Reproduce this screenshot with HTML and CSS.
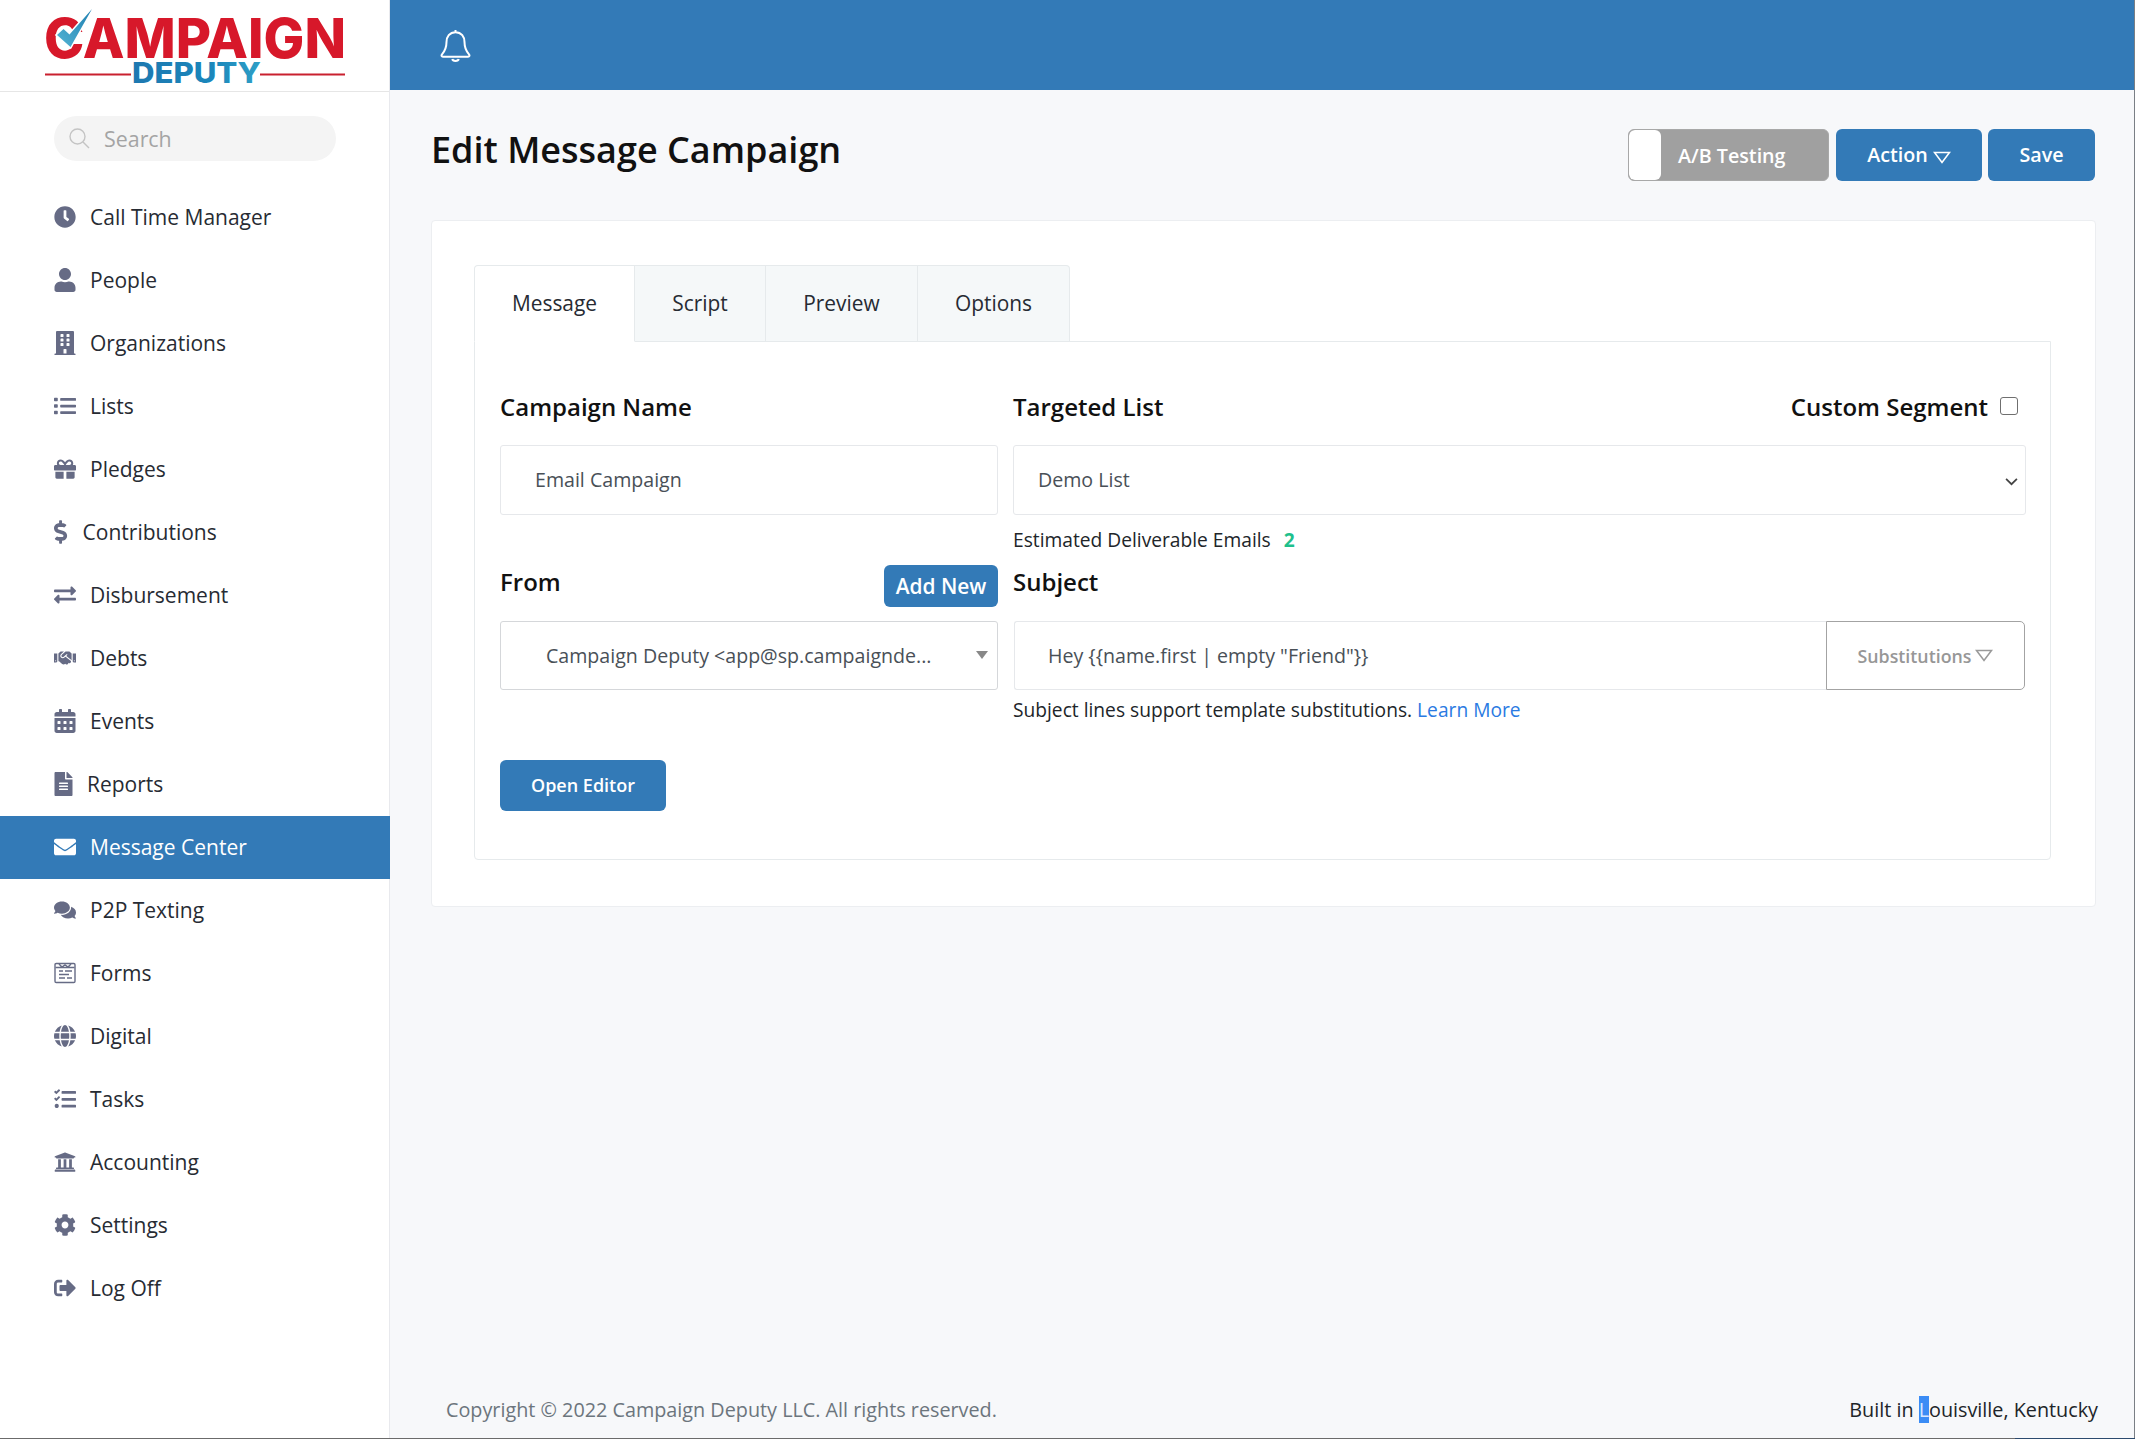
FILE: index.html
```html
<!DOCTYPE html>
<html lang="en">
<head>
<meta charset="utf-8">
<title>Edit Message Campaign</title>
<link rel="stylesheet" href="styles.css">
</head>
<body>
<div class="app">
  <aside class="sidebar">
    <div class="brand">
      <svg class="logo" viewBox="0 0 390 91" aria-label="Campaign Deputy">
        <defs>
          <linearGradient id="blueGrad" x1="0" y1="0" x2="1" y2="0"><stop offset="0" stop-color="#1e78b0"/><stop offset="0.6" stop-color="#1a86bb"/><stop offset="1" stop-color="#2f9fc6"/></linearGradient>
          <linearGradient id="checkGrad" x1="0" y1="1" x2="1" y2="0"><stop offset="0" stop-color="#55b4d4"/><stop offset="1" stop-color="#1f7fb0"/></linearGradient>
        </defs>
        <text class="logo-top" x="44" y="58" textLength="302" lengthAdjust="spacingAndGlyphs">CAMPAIGN</text>
        <path d="M92 9 L70.500 47 L57 35 L63.500 29 L69.500 34.500 Z" fill="url(#checkGrad)" stroke="#fff" stroke-width="3" paint-order="stroke"/>
        <rect x="45" y="73.500" width="86" height="2" fill="#c9202f"/>
        <rect x="260" y="73.500" width="85" height="2" fill="#c9202f"/>
        <text class="logo-bottom" x="132" y="83" textLength="129" lengthAdjust="spacingAndGlyphs" fill="url(#blueGrad)">DEPUTY</text>
      </svg>
    </div>
    <div class="search">
      <svg class="search-ico" viewBox="0 0 21 21"><circle cx="8.500" cy="8.500" r="7.500"/><path d="M14 14 L20 20"/></svg>
      <span>Search</span>
    </div>
    <ul class="nav">
      <li class="nav-item"><svg class="ico" viewBox="0 0 512 512"><path d="M256,8C119,8,8,119,8,256S119,504,256,504,504,393,504,256,393,8,256,8Zm92.49,313h0l-20,25a16,16,0,0,1-22.49,2.5h0l-67-49.72a40,40,0,0,1-15-31.23V112a16,16,0,0,1,16-16h32a16,16,0,0,1,16,16V256l58,42.5A16,16,0,0,1,348.49,321Z"/></svg><span>Call Time Manager</span></li>
      <li class="nav-item"><svg class="ico" viewBox="0 0 448 512"><path d="M224 256c70.700 0 128-57.300 128-128S294.700 0 224 0 96 57.300 96 128s57.300 128 128 128zm89.600 32h-16.700c-22.200 10.200-46.900 16-72.900 16s-50.600-5.800-72.900-16h-16.700C60.200 288 0 348.200 0 422.400V464c0 26.500 21.500 48 48 48h352c26.500 0 48-21.500 48-48v-41.600c0-74.200-60.200-134.400-134.400-134.400z"/></svg><span>People</span></li>
      <li class="nav-item"><svg class="ico" viewBox="0 0 448 512"><path d="M436 480h-20V24c0-13.255-10.745-24-24-24H56C42.745 0 32 10.745 32 24v456H12c-6.627 0-12 5.373-12 12v20h448v-20c0-6.627-5.373-12-12-12zM128 76c0-6.627 5.373-12 12-12h40c6.627 0 12 5.373 12 12v40c0 6.627-5.373 12-12 12h-40c-6.627 0-12-5.373-12-12V76zm0 96c0-6.627 5.373-12 12-12h40c6.627 0 12 5.373 12 12v40c0 6.627-5.373 12-12 12h-40c-6.627 0-12-5.373-12-12v-40zm52 148h-40c-6.627 0-12-5.373-12-12v-40c0-6.627 5.373-12 12-12h40c6.627 0 12 5.373 12 12v40c0 6.627-5.373 12-12 12zm76 160h-64v-84c0-6.627 5.373-12 12-12h40c6.627 0 12 5.373 12 12v84zm64-172c0 6.627-5.373 12-12 12h-40c-6.627 0-12-5.373-12-12v-40c0-6.627 5.373-12 12-12h40c6.627 0 12 5.373 12 12v40zm0-96c0 6.627-5.373 12-12 12h-40c-6.627 0-12-5.373-12-12v-40c0-6.627 5.373-12 12-12h40c6.627 0 12 5.373 12 12v40zm0-96c0 6.627-5.373 12-12 12h-40c-6.627 0-12-5.373-12-12V76c0-6.627 5.373-12 12-12h40c6.627 0 12 5.373 12 12v40z"/></svg><span>Organizations</span></li>
      <li class="nav-item"><svg class="ico" viewBox="0 0 512 512"><path d="M0 80a16 16 0 0 1 16-16h56a16 16 0 0 1 16 16v48a16 16 0 0 1-16 16H16a16 16 0 0 1-16-16zM0 232a16 16 0 0 1 16-16h56a16 16 0 0 1 16 16v48a16 16 0 0 1-16 16H16a16 16 0 0 1-16-16zM0 384a16 16 0 0 1 16-16h56a16 16 0 0 1 16 16v48a16 16 0 0 1-16 16H16a16 16 0 0 1-16-16zM144 88a16 16 0 0 1 16-16h336a16 16 0 0 1 16 16v32a16 16 0 0 1-16 16H160a16 16 0 0 1-16-16zM144 240a16 16 0 0 1 16-16h336a16 16 0 0 1 16 16v32a16 16 0 0 1-16 16H160a16 16 0 0 1-16-16zM144 392a16 16 0 0 1 16-16h336a16 16 0 0 1 16 16v32a16 16 0 0 1-16 16H160a16 16 0 0 1-16-16z"/></svg><span>Lists</span></li>
      <li class="nav-item"><svg class="ico" viewBox="0 0 512 512"><path d="M32 448c0 17.700 14.300 32 32 32h160V320H32v128zm256 32h160c17.700 0 32-14.300 32-32V320H288v160zm192-320h-42.100c6.200-12.100 10.100-25.500 10.100-40 0-48.500-39.500-88-88-88-41.600 0-68.500 21.300-103 68.300-34.500-47-61.400-68.300-103-68.300-48.500 0-88 39.500-88 88 0 14.500 3.800 27.900 10.100 40H32c-17.700 0-32 14.300-32 32v80c0 8.800 7.200 16 16 16h480c8.800 0 16-7.200 16-16v-80c0-17.700-14.300-32-32-32zm-326.100 0c-22.100 0-40-17.900-40-40s17.900-40 40-40c19.900 0 34.600 3.300 86.100 80h-86.100zm206.100 0h-86.100c51.400-76.500 65.700-80 86.100-80 22.100 0 40 17.900 40 40s-17.900 40-40 40z"/></svg><span>Pledges</span></li>
      <li class="nav-item"><svg class="ico ico-dollar" viewBox="0 0 320 512"><path d="M209.200 233.400l-108-31.600C88.700 198.200 80 186.500 80 173.500c0-16.300 13.200-29.500 29.500-29.500h66.300c12.200 0 24.200 3.700 34.200 10.500 6.100 4.100 14.300 3.100 19.500-2l34.800-34c7.100-6.900 6.100-18.400-1.800-24.500C238 74.800 207.400 64.100 176 64V16c0-8.800-7.200-16-16-16h-32c-8.800 0-16 7.200-16 16v48h-2.500C45.800 64-5.400 118.700.5 183.600c4.200 46.100 39.400 83.600 83.800 96.600l102.500 30c12.500 3.700 21.200 15.300 21.200 28.300 0 16.300-13.200 29.500-29.500 29.500h-66.300C100 368 88 364.300 78 357.500c-6.100-4.100-14.300-3.100-19.500 2l-34.800 34c-7.100 6.900-6.100 18.400 1.800 24.500 24.500 19.200 55.100 29.900 86.500 30v48c0 8.800 7.200 16 16 16h32c8.800 0 16-7.200 16-16v-48.200c46.600-.9 90.300-28.600 105.700-72.700 21.500-61.600-14.600-124.800-72.500-141.700z"/></svg><span>Contributions</span></li>
      <li class="nav-item"><svg class="ico" viewBox="0 0 512 512"><path d="M0 168v-16c0-13.255 10.745-24 24-24h360V80c0-21.367 25.899-32.042 40.971-16.971l80 80c9.372 9.373 9.372 24.569 0 33.941l-80 80C409.956 271.982 384 261.456 384 240v-48H24c-13.255 0-24-10.745-24-24zm488 152H128v-48c0-21.314-25.862-32.080-40.971-16.971l-80 80c-9.372 9.373-9.372 24.569 0 33.941l80 80C102.057 463.997 128 453.437 128 432v-48h360c13.255 0 24-10.745 24-24v-16c0-13.255-10.745-24-24-24z"/></svg><span>Disbursement</span></li>
      <li class="nav-item"><svg class="ico" viewBox="0 0 640 512"><path d="M434.700 64h-85.900c-8 0-15.700 3-21.600 8.400l-98.300 90c-.1.1-.2.300-.3.400-16.600 15.600-16.300 40.500-2.100 56 12.700 13.900 39.400 17.600 56.100 2.700.1-.1.300-.1.400-.2l79.900-73.200c6.500-5.900 16.700-5.500 22.600 1 6 6.500 5.500 16.600-1 22.600l-26.100 23.900L504 313.800c2.900 2.400 5.500 5 7.900 7.700V128l-54.600-54.600c-5.900-6-14.100-9.400-22.600-9.400zM544 128.200v223.900c0 17.700 14.300 32 32 32h64V128.200h-96zm48 223.900c-8.800 0-16-7.200-16-16s7.200-16 16-16 16 7.200 16 16-7.200 16-16 16zM0 384h64c17.700 0 32-14.300 32-32V128.200H0V384zm48-63.900c8.800 0 16 7.200 16 16s-7.200 16-16 16-16-7.200-16-16c0-8.900 7.200-16 16-16zm435.900 18.600L334.600 217.500l-30 27.500c-29.700 27.100-75.200 24.500-101.700-4.400-26.900-29.400-24.800-74.900 4.400-101.700L289.100 64h-83.800c-8.500 0-16.600 3.400-22.600 9.400L128 128v223.900h18.300l90.500 81.900c27.400 22.300 67.700 18.100 90-9.300l.2-.2 17.900 15.500c15.900 13 39.400 10.500 52.300-5.400l31.400-38.600 5.400 4.400c13.700 11.100 33.900 9.100 45-4.700l9.500-11.700c11.200-13.800 9.100-33.900-4.600-45.100z"/></svg><span>Debts</span></li>
      <li class="nav-item"><svg class="ico" viewBox="0 0 448 512"><path d="M0 464c0 26.500 21.500 48 48 48h352c26.500 0 48-21.500 48-48V192H0v272zm320-196c0-6.600 5.400-12 12-12h40c6.600 0 12 5.400 12 12v40c0 6.600-5.400 12-12 12h-40c-6.600 0-12-5.400-12-12v-40zm0 128c0-6.600 5.400-12 12-12h40c6.600 0 12 5.400 12 12v40c0 6.600-5.400 12-12 12h-40c-6.600 0-12-5.400-12-12v-40zM192 268c0-6.600 5.400-12 12-12h40c6.600 0 12 5.400 12 12v40c0 6.600-5.400 12-12 12h-40c-6.600 0-12-5.400-12-12v-40zm0 128c0-6.600 5.400-12 12-12h40c6.600 0 12 5.400 12 12v40c0 6.600-5.400 12-12 12h-40c-6.600 0-12-5.400-12-12v-40zM64 268c0-6.600 5.400-12 12-12h40c6.600 0 12 5.400 12 12v40c0 6.600-5.400 12-12 12H76c-6.600 0-12-5.400-12-12v-40zm0 128c0-6.600 5.400-12 12-12h40c6.600 0 12 5.400 12 12v40c0 6.600-5.400 12-12 12H76c-6.600 0-12-5.400-12-12v-40zM400 64h-48V16c0-8.800-7.200-16-16-16h-32c-8.800 0-16 7.200-16 16v48H160V16c0-8.800-7.200-16-16-16h-32c-8.800 0-16 7.200-16 16v48H48C21.500 64 0 85.500 0 112v48h448v-48c0-26.500-21.500-48-48-48z"/></svg><span>Events</span></li>
      <li class="nav-item"><svg class="ico ico-file" viewBox="0 0 384 512"><path d="M224 136V0H24C10.700 0 0 10.700 0 24v464c0 13.300 10.700 24 24 24h336c13.300 0 24-10.700 24-24V160H248c-13.200 0-24-10.800-24-24zm64 236c0 6.600-5.400 12-12 12H108c-6.600 0-12-5.400-12-12v-8c0-6.600 5.400-12 12-12h168c6.600 0 12 5.400 12 12v8zm0-64c0 6.600-5.400 12-12 12H108c-6.600 0-12-5.400-12-12v-8c0-6.600 5.400-12 12-12h168c6.600 0 12 5.400 12 12v8zm0-72v8c0 6.600-5.400 12-12 12H108c-6.600 0-12-5.400-12-12v-8c0-6.600 5.400-12 12-12h168c6.600 0 12 5.400 12 12zm96-114.100v6.100H256V0h6.100c6.400 0 12.500 2.500 17 7l97.900 98c4.500 4.500 7 10.600 7 16.900z"/></svg><span>Reports</span></li>
      <li class="nav-item active"><svg class="ico" viewBox="0 0 512 512"><path d="M502.300 190.800c3.900-3.100 9.700-.2 9.700 4.700V400c0 26.500-21.500 48-48 48H48c-26.500 0-48-21.500-48-48V195.600c0-5 5.700-7.800 9.700-4.700 22.400 17.400 52.100 39.500 154.100 113.600 21.100 15.400 56.700 47.800 92.200 47.600 35.700.3 72-32.800 92.300-47.600 102-74.100 131.600-96.300 154-113.700zM256 320c23.200.4 56.600-29.200 73.400-41.400 132.700-96.300 142.800-104.700 173.400-128.700 5.800-4.500 9.200-11.500 9.200-18.900v-19c0-26.500-21.500-48-48-48H48C21.500 64 0 85.500 0 112v19c0 7.400 3.400 14.300 9.200 18.900 30.600 23.900 40.700 32.400 173.400 128.700 16.800 12.200 50.200 41.800 73.400 41.400z"/></svg><span>Message Center</span></li>
      <li class="nav-item"><svg class="ico" viewBox="0 0 576 512"><path d="M416 192c0-88.400-93.100-160-208-160S0 103.600 0 192c0 34.300 14.100 65.900 38 92-13.400 30.200-35.500 54.200-35.800 54.500-2.200 2.300-2.800 5.700-1.500 8.700S4.800 352 8 352c36.600 0 66.900-12.300 88.700-25 32.200 15.700 70.300 25 111.300 25 114.900 0 208-71.600 208-160zm122 220c23.900-26 38-57.700 38-92 0-66.900-53.500-124.200-129.300-148.100.9 6.600 1.300 13.300 1.300 20.100 0 105.900-107.700 192-240 192-10.800 0-21.300-.8-31.700-1.900C207.800 439.600 281.800 480 368 480c41 0 79.100-9.200 111.300-25 21.800 12.700 52.100 25 88.700 25 3.200 0 6.100-1.900 7.300-4.800 1.300-2.900.7-6.300-1.500-8.700-.3-.3-22.400-24.200-35.800-54.500z"/></svg><span>P2P Texting</span></li>
      <li class="nav-item"><svg class="ico ico-line" viewBox="0 0 22 22"><rect x="1" y="1.500" width="20" height="19" rx="1.200"/><path d="M1.500 5.500 H20.500 M5 2 L8 5 L11 2.800 L14 5 L17 2 M5 9 H9 M11 9 H18 M5 12.500 H15 M5 16 H11 M13 16 H18"/></svg><span>Forms</span></li>
      <li class="nav-item"><svg class="ico" viewBox="0 0 496 512"><path d="M336.500 160C322 70.700 287.800 8 248 8s-74 62.700-88.500 152h177zM152 256c0 22.200 1.200 43.500 3.300 64h185.300c2.100-20.500 3.300-41.800 3.300-64s-1.200-43.500-3.300-64H155.300c-2.100 20.500-3.300 41.800-3.300 64zm324.700-96c-28.600-67.900-86.500-120.400-158-141.600 24.400 33.800 41.200 84.700 50 141.600h108zM177.200 18.400C105.800 39.600 47.800 92.100 19.300 160h108c8.700-56.900 25.500-107.800 49.900-141.600zM487.400 192H372.700c2.100 21 3.300 42.500 3.300 64s-1.200 43-3.300 64h114.600c5.500-20.500 8.600-41.800 8.600-64s-3.100-43.500-8.500-64zM120 256c0-21.500 1.200-43 3.300-64H8.600C3.200 212.500 0 233.800 0 256s3.200 43.500 8.600 64h114.600c-2-21-3.200-42.500-3.200-64zm39.500 96c14.500 89.300 48.700 152 88.500 152s74-62.700 88.500-152h-177zm159.300 141.600c71.400-21.200 129.400-73.700 158-141.600h-108c-8.800 56.900-25.600 107.800-50 141.600zM19.300 352c28.600 67.900 86.500 120.400 158 141.600-24.400-33.800-41.200-84.700-50-141.600h-108z"/></svg><span>Digital</span></li>
      <li class="nav-item"><svg class="ico" viewBox="0 0 512 512"><path d="M139.600 50.600l-20-20c-3-3-8-3-11 0L55 84l-18-18c-3-3-8-3-11 0L5 87c-3 3-3 8 0 11l44 44c3 3 8 3 11 0l18-18 61.600-62.400c3-3 3-8 0-11.400zM139.600 210.600l-20-20c-3-3-8-3-11 0L55 244l-18-18c-3-3-8-3-11 0L5 247c-3 3-3 8 0 11l44 44c3 3 8 3 11 0l18-18 61.600-62.400c3-3 3-8 0-11.400zM64 368c-26.500 0-48 21.500-48 48s21.500 48 48 48 48-21.500 48-48-21.500-48-48-48zM176 88a16 16 0 0 1 16-16h304a16 16 0 0 1 16 16v32a16 16 0 0 1-16 16H192a16 16 0 0 1-16-16zM176 248a16 16 0 0 1 16-16h304a16 16 0 0 1 16 16v32a16 16 0 0 1-16 16H192a16 16 0 0 1-16-16zM176 408a16 16 0 0 1 16-16h304a16 16 0 0 1 16 16v32a16 16 0 0 1-16 16H192a16 16 0 0 1-16-16z"/></svg><span>Tasks</span></li>
      <li class="nav-item"><svg class="ico" viewBox="0 0 512 512"><path d="M496 128v16a8 8 0 0 1-8 8h-24v12c0 6.627-5.373 12-12 12H60c-6.627 0-12-5.373-12-12v-12H24a8 8 0 0 1-8-8v-16a8 8 0 0 1 4.941-7.392l232-88a7.996 7.996 0 0 1 6.118 0l232 88A8 8 0 0 1 496 128zm-24 304H40c-13.255 0-24 10.745-24 24v16a8 8 0 0 0 8 8h464a8 8 0 0 0 8-8v-16c0-13.255-10.745-24-24-24zM96 192v192H60c-6.627 0-12 5.373-12 12v20h416v-20c0-6.627-5.373-12-12-12h-36V192h-64v192h-64V192h-64v192h-64V192H96z"/></svg><span>Accounting</span></li>
      <li class="nav-item"><svg class="ico" viewBox="0 0 512 512"><path d="M487.400 315.700l-42.600-24.600c4.300-23.200 4.300-47 0-70.200l42.600-24.600c4.900-2.800 7.100-8.600 5.500-14-11.100-35.600-30-67.800-54.700-94.600-3.800-4.100-10-5.100-14.800-2.300L380.800 110c-17.900-15.400-38.500-27.300-60.800-35.100V25.800c0-5.600-3.900-10.500-9.400-11.700-36.700-8.200-74.300-7.800-109.200 0-5.500 1.200-9.400 6.100-9.400 11.700V75c-22.200 7.900-42.800 19.800-60.800 35.100L88.700 85.500c-4.900-2.800-11-1.900-14.800 2.300-24.700 26.700-43.600 58.900-54.700 94.600-1.700 5.400.6 11.200 5.500 14L67.300 221c-4.300 23.200-4.300 47 0 70.200l-42.600 24.600c-4.900 2.800-7.100 8.600-5.500 14 11.100 35.600 30 67.800 54.700 94.600 3.800 4.100 10 5.100 14.800 2.300l42.600-24.600c17.900 15.400 38.500 27.300 60.800 35.100v49.200c0 5.600 3.900 10.500 9.400 11.700 36.700 8.200 74.300 7.800 109.200 0 5.500-1.200 9.400-6.100 9.400-11.700v-49.200c22.200-7.900 42.800-19.800 60.800-35.100l42.600 24.600c4.900 2.800 11 1.900 14.800-2.300 24.700-26.700 43.600-58.900 54.700-94.600 1.500-5.500-.7-11.300-5.600-14.100zM256 336c-44.100 0-80-35.900-80-80s35.900-80 80-80 80 35.900 80 80-35.900 80-80 80z"/></svg><span>Settings</span></li>
      <li class="nav-item"><svg class="ico" viewBox="0 0 512 512"><path d="M497 273L329 441c-15 15-41 4.500-41-17v-96H152c-13.300 0-24-10.700-24-24v-96c0-13.300 10.700-24 24-24h136V88c0-21.400 25.900-32 41-17l168 168c9.300 9.400 9.300 24.600 0 34zM192 436v-40c0-6.600-5.400-12-12-12H96c-17.700 0-32-14.300-32-32V160c0-17.700 14.300-32 32-32h84c6.600 0 12-5.400 12-12V76c0-6.600-5.400-12-12-12H96c-53 0-96 43-96 96v192c0 53 43 96 96 96h84c6.600 0 12-5.400 12-12z"/></svg><span>Log Off</span></li>
    </ul>
  </aside>

  <div class="main">
    <header class="topbar">
      <svg class="bell" viewBox="0 0 31 33"><path d="M15.500 3.200C9.500 3.200 6.500 8 6.500 13c0 6-1.500 9-4.500 12.300-1 1.200-.5 2.400 1 2.400h25c1.500 0 2-1.200 1-2.400C26 22 24.500 19 24.500 13c0-5-3-9.800-9-9.800zM15.500 1v2.200M12.300 30c.5 2.600 5.900 2.600 6.400 0"/></svg>
    </header>
    <div class="content">
      <div class="page-head">
        <h1 class="page-title">Edit Message Campaign</h1>
        <div class="actions">
          <div class="toggle"><span class="knob"></span><span class="toggle-label">A/B Testing</span></div>
          <button class="btn btn-action">Action <svg class="tri" viewBox="0 0 18 13"><path d="M1.500 1.500 H16.500 L9 11.500 Z"/></svg></button>
          <button class="btn btn-save">Save</button>
        </div>
      </div>

      <section class="card">
        <div class="tabs">
          <div class="tab tab-active tab-1">Message</div>
          <div class="tab tab-2">Script</div>
          <div class="tab tab-3">Preview</div>
          <div class="tab tab-4">Options</div>
        </div>
        <div class="panel">
          <div class="form-grid">
            <div class="field">
              <div class="label-row"><label class="label">Campaign Name</label></div>
              <div class="control control-name">Email Campaign</div>
            </div>
            <div class="field">
              <div class="label-row">
                <label class="label">Targeted List</label>
                <label class="label segment">Custom Segment <input class="check" type="checkbox"></label>
              </div>
              <div class="control control-list">Demo List
                <svg class="chevron" viewBox="0 0 12 8"><path d="M1 1.500 L6 6.500 L11 1.500"/></svg>
              </div>
              <div class="hint">Estimated Deliverable Emails <b class="count">2</b></div>
            </div>
            <div class="field">
              <div class="label-row label-row-from">
                <label class="label">From</label>
                <button class="btn-add">Add New</button>
              </div>
              <div class="control control-from"><span class="from-text">Campaign Deputy &lt;app@sp.campaignde...</span><span class="caret"></span></div>
            </div>
            <div class="field">
              <div class="label-row label-row-from">
                <label class="label">Subject</label>
              </div>
              <div class="subject-group">
                <div class="control control-subject">Hey {{name.first | empty "Friend"}}</div>
                <div class="subs">Substitutions <svg class="tri tri-gray" viewBox="0 0 18 13"><path d="M1.500 1.500 H16.500 L9 11.500 Z"/></svg></div>
              </div>
              <div class="hint hint-sub">Subject lines support template substitutions. <a class="link">Learn More</a></div>
            </div>
          </div>
          <button class="btn btn-editor">Open Editor</button>
        </div>
      </section>

      <footer class="footer">
        <span class="copyright">Copyright © 2022 Campaign Deputy LLC. All rights reserved.</span>
        <span class="built">Built in <span class="sel">L</span>ouisville, Kentucky</span>
      </footer>
    </div>
  </div>
</div>
<div class="baseline"></div>
</body>
</html>
```
FILE: styles.css
```css
* { box-sizing: border-box; }
html, body { margin: 0; padding: 0; }
body { font-family: "Open Sans", "Liberation Sans", sans-serif; color: #212529; background: #fff; }

.app {
  display: flex;
  width: 2135px;
  height: 1438px;
  border-right: 1px solid #7a7f85;
  overflow: hidden;
}
.baseline { width: 2135px; height: 1px; background: linear-gradient(to right, #6b6b6b 2015px, #2c4a6e 2015px); }

/* Sidebar */
.sidebar { width: 390px; flex: none; background: #fff; border-right: 1px solid #e8e9ed; display: flex; flex-direction: column; }
.brand { height: 92px; border-bottom: 1px solid #e6e6e6; flex: none; }
.logo { display: block; width: 390px; height: 91px; }
.logo-top { font-family: "Inter", "Liberation Sans", sans-serif; font-weight: 800; font-size: 55px; fill: #d7182a; }
.logo-bottom { font-family: "Inter", "Liberation Sans", sans-serif; font-weight: 800; font-size: 29px; }

.search {
  margin: 24px 0 24.5px 54px;
  width: 282px;
  height: 45px;
  border-radius: 23px;
  background: #f4f4f4;
  display: flex;
  align-items: center;
  padding-left: 15px;
  gap: 14px;
  color: #a4a4a4;
  font-size: 21.4px;
}
.search-ico { width: 21px; height: 21px; fill: none; stroke: #c4c4c4; stroke-width: 1.4; flex: none; }

.nav { list-style: none; margin: 0; padding: 0; }
.nav-item {
  height: 63px;
  display: flex;
  align-items: center;
  gap: 14px;
  padding-left: 54px;
  font-size: 21px;
  color: #272b33;
  width: 390px;
}
.ico { width: 22px; height: 24px; flex: none; fill: #666b85; }
.ico-dollar { width: 14.6px; }
.ico-file { width: 19px; }
.ico-line { fill: none; stroke: #666b85; stroke-width: 1.4; }
.active { background: #337ab7; color: #fff; }
.active .ico { fill: #fff; }

/* Main */
.main { flex: 1; min-width: 0; display: flex; flex-direction: column; }
.topbar { height: 90px; flex: none; background: #337ab7; display: flex; align-items: center; padding-left: 50px; }
.bell { width: 31px; height: 33px; fill: none; stroke: #fff; stroke-width: 2; }

.content { flex: 1; background: #f7f8fa; display: flex; flex-direction: column; padding: 39px 39px 0 41px; }
.page-head { display: flex; justify-content: space-between; align-items: center; height: 52px; }
.page-title { margin: 0; font-size: 36px; font-weight: 600; color: #111; line-height: 1; position: relative; top: -5px; }
.actions { display: flex; }

.toggle { width: 201px; height: 52px; background: #a0a0a0; border: 1px solid #a8a8a8; border-radius: 6px; display: flex; align-items: center; margin-right: 7px; color: #fff; overflow: hidden; }
.knob { width: 32px; height: 50px; background: #fff; border-radius: 6px; flex: none; }
.toggle-label { margin-left: 17px; font-size: 19.7px; font-weight: 600; }

.btn { border: 0; background: #337ab7; color: #fff; font-family: inherit; font-weight: 600; border-radius: 6px; height: 52px; font-size: 19.7px; padding: 0 0 1px; }
.btn-action { width: 146px; margin-right: 6px; }
.btn-save { width: 107px; }
.tri { width: 18px; height: 13px; fill: none; stroke: #fff; stroke-width: 1.6; vertical-align: -2px; }
.tri-gray { stroke: #9a9a9a; }

.card { margin-top: 39px; width: 1665px; background: #fff; border: 1px solid #eceef1; border-radius: 4px; padding: 44px 44px 46px 42px; }
.tabs { display: flex; margin-bottom: -1px; position: relative; }
.tab { height: 77px; padding-bottom: 1px; display: flex; align-items: center; justify-content: center; font-size: 20.9px; color: #272b33; background: #f5f8f9; border: 1px solid #e6eaec; border-left: 0; }
.tab-1 { width: 161px; }
.tab-2 { width: 131px; }
.tab-3 { width: 152px; }
.tab-4 { width: 152px; border-top-right-radius: 4px; }
.tab-active { background: #fff; border-left: 1px solid #e6eaec; border-bottom-color: #fff; border-top-left-radius: 4px; }

.panel { border: 1px solid #e6eaec; border-radius: 0 0 4px 4px; padding: 44px 25px 48px 25px; }
.form-grid { display: grid; grid-template-columns: 498px 1013px; column-gap: 15px; row-gap: 12px; }
.field { display: flex; flex-direction: column; }
.label-row { height: 42px; margin-bottom: 17px; display: flex; justify-content: space-between; align-items: flex-start; }
.label-row-from { margin-bottom: 14px; }
.label { font-size: 24px; font-weight: 600; color: #111; line-height: 42px; }
.label-row-from .label { line-height: 34px; }
.segment { display: flex; align-items: center; margin-right: 8px; gap: 12px; }
.check { appearance: none; -webkit-appearance: none; width: 18px; height: 18px; margin: -3px 0 0 0; border: 1px solid #6f6f6f; border-radius: 3px; background: #fff; }

.control { height: 70px; border: 1px solid #e6e8eb; border-radius: 3px; display: flex; align-items: center; padding-bottom: 1px; font-size: 19.6px; color: #495057; background: #fff; }
.control-name { padding-left: 34px; }
.control-list { padding-left: 24px; position: relative; }
.chevron { position: absolute; right: 7px; top: 31px; width: 13px; height: 9px; fill: none; stroke: #444; stroke-width: 1.6; }
.control-from { height: 69px; border-color: #d5d7da; padding-left: 45px; padding-right: 9px; justify-content: space-between; }
.caret { width: 0; height: 0; border-left: 6px solid transparent; border-right: 6px solid transparent; border-top: 8px solid #888; }

.hint { margin-top: 12px; font-size: 19.2px; color: #212529; line-height: 26px; }
.hint-sub { margin-top: 7px; }
.count { color: #1fc08c; margin-left: 8px; font-weight: 700; }
.link { color: #2a7ae2; }

.btn-add { border: 0; background: #337ab7; color: #fff; font-family: inherit; font-weight: 600; font-size: 20.9px; width: 114px; height: 42px; border-radius: 6px; padding: 0; }

.subject-group { display: flex; height: 69px; margin-left: 1px; margin-right: 1px; }
.control-subject { flex: 1; height: 69px; padding-left: 33px; border-right: 0; border-radius: 3px 0 0 3px; }
.subs { width: 199px; flex: none; border: 1px solid #a3a3a3; border-radius: 0 5px 5px 0; display: flex; align-items: center; justify-content: center; gap: 4px; color: #979797; font-size: 17.8px; font-weight: 600; }

.btn-editor { display: block; width: 166px; height: 51px; margin-top: 37px; font-size: 18px; padding-bottom: 1px; }

/* Footer */
.footer { margin-top: auto; height: 42px; display: flex; justify-content: space-between; font-size: 19.8px; padding: 0 0 0 15px; margin-right: -3px; align-items: flex-start; line-height: 28px; }
.copyright { color: #6c757d; }
.built { color: #212529; }
.sel { background: #3b8cf5; color: #d8e8ff; }
```
